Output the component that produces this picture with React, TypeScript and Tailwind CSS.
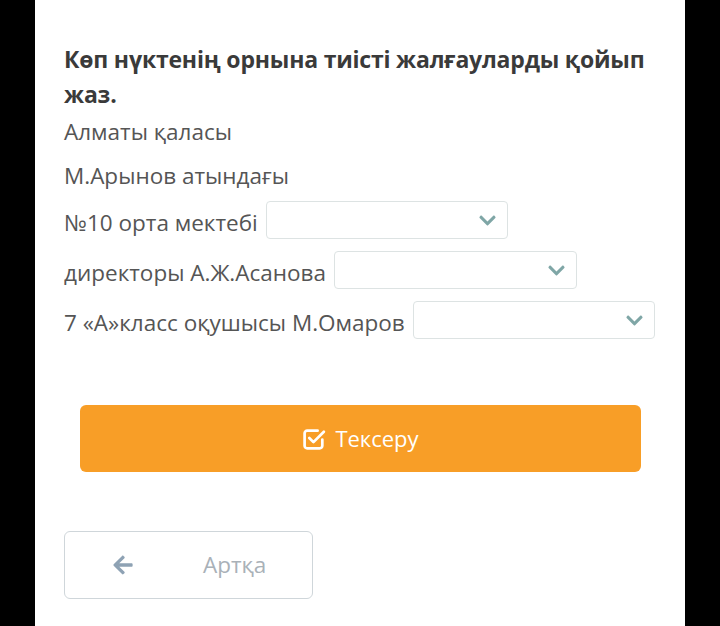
import { FaArrowLeft, FaChevronDown } from "react-icons/fa";

const lines = [
  { text: "№10 орта мектебі", w: "w-[242px]" },
  { text: "директоры А.Ж.Асанова", w: "w-[243px]" },
  { text: "7 «А»класс оқушысы М.Омаров", w: "w-[242px]" },
];

const Select = ({ w }: { w: string }) => (
  <div className={`${w} h-[38px] border border-[#dde3e3] rounded-[4px] bg-white flex items-center justify-end pr-[10px]`}>
    <FaChevronDown className="w-[19px] h-[19px] text-[#7fa6a6]" />
  </div>
);

const CheckIcon = () => (
  <svg viewBox="0 0 24 24" className="w-[25px] h-[25px]" fill="none" stroke="currentColor" strokeWidth={2.6} strokeLinecap="round" strokeLinejoin="round">
    <path d="M19.5 13v6a2.5 2.5 0 0 1-2.5 2.5H5A2.5 2.5 0 0 1 2.5 19V7A2.5 2.5 0 0 1 5 4.5h10" />
    <path d="M7 11.5l4 4 10-10" />
  </svg>
);

export default function App() {
  return (
    <div className="w-[720px] h-[626px] bg-black flex" style={{ fontFamily: '"Open Sans", "Noto Sans", sans-serif' }}>
      <div className="ml-[35px] w-[650px] h-full bg-white pl-[29px] pt-[42px]">
        <h1 className="text-[23px] font-bold leading-[35px] text-[#3a3a3a] w-[600px] tracking-[-0.2px]">
          Көп нүктенің орнына тиісті жалғауларды қойып жаз.
        </h1>
        <div className="-mt-[2px] text-[22.5px] text-[#555] leading-[30px]">
          <div className="h-[44px] flex items-center">Алматы қаласы</div>
          <div className="h-[44px] flex items-center">М.Арынов атындағы</div>
          <div className="flex flex-col gap-[12px] mt-[3px]">
            {lines.map((l) => (
              <div key={l.text} className="flex items-center gap-[8px]">
                <span className="pt-[6px]">{l.text}</span>
                <Select w={l.w} />
              </div>
            ))}
          </div>
        </div>
        <div className="mt-[66px] ml-[16px] w-[561px] h-[67px] rounded-[6px] bg-[#f89e27] flex items-center justify-center gap-[8px] text-white text-[22px]">
          <CheckIcon />
          <span>Тексеру</span>
        </div>
        <div className="mt-[59px] w-[249px] h-[68px] rounded-[6px] border border-[#cfd6da] flex items-center text-[22.5px] text-[#a9b1b8]">
          <FaArrowLeft className="ml-[47px] w-[22px] h-[22px] text-[#8ea2b4]" />
          <span className="ml-[69px]">Артқа</span>
        </div>
      </div>
    </div>
  );
}
